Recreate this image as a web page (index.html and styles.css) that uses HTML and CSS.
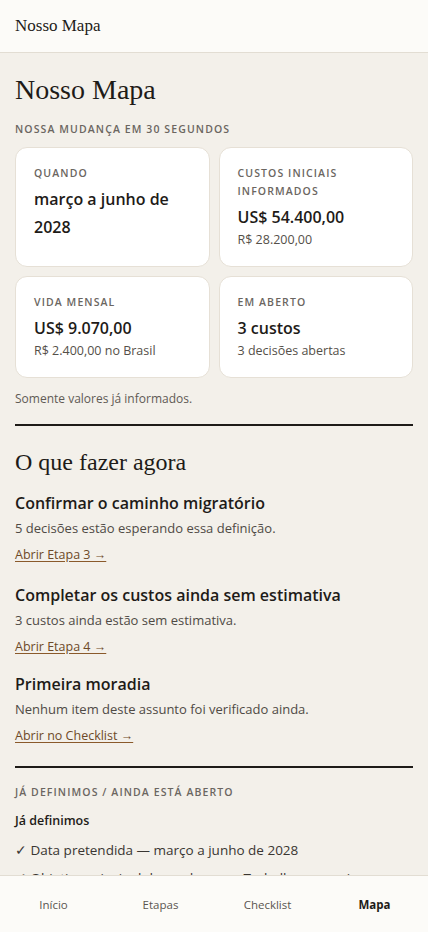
FILE: index.html
```html
<!DOCTYPE html>
<html lang="pt-BR">
<head>
  <meta charset="UTF-8">
  <title>Nosso Mapa</title>
  <link rel="stylesheet" href="styles.css">
</head>
<body>
  <header class="topbar">Nosso Mapa</header>

  <main class="page">
    <h1>Nosso Mapa</h1>
    <p class="eyebrow">Nossa mudança em 30 segundos</p>

    <div class="summary">
      <div class="card">
        <p class="card-label">Quando</p>
        <p class="card-value">março a junho de 2028</p>
      </div>
      <div class="card">
        <p class="card-label">Custos iniciais informados</p>
        <p class="card-value">US$ 54.400,00</p>
        <p class="card-sub">R$ 28.200,00</p>
      </div>
      <div class="card">
        <p class="card-label">Vida mensal</p>
        <p class="card-value">US$ 9.070,00</p>
        <p class="card-sub">R$ 2.400,00 no Brasil</p>
      </div>
      <div class="card">
        <p class="card-label">Em aberto</p>
        <p class="card-value">3 custos</p>
        <p class="card-sub">3 decisões abertas</p>
      </div>
    </div>
    <p class="note">Somente valores já informados.</p>

    <section class="block">
      <h2>O que fazer agora</h2>

      <div class="task">
        <h3>Confirmar o caminho migratório</h3>
        <p>5 decisões estão esperando essa definição.</p>
        <a href="#">Abrir Etapa 3 →</a>
      </div>
      <div class="task">
        <h3>Completar os custos ainda sem estimativa</h3>
        <p>3 custos ainda estão sem estimativa.</p>
        <a href="#">Abrir Etapa 4 →</a>
      </div>
      <div class="task last">
        <h3>Primeira moradia</h3>
        <p>Nenhum item deste assunto foi verificado ainda.</p>
        <a href="#">Abrir no Checklist →</a>
      </div>
    </section>

    <section class="block">
      <p class="eyebrow">Já definimos / ainda está aberto</p>
      <h4>Já definimos</h4>
      <ul class="checks">
        <li>✓ Data pretendida — março a junho de 2028</li>
        <li>✓ Objetivo principal da mudança — Trabalho e carreira</li>
      </ul>
    </section>
  </main>

  <nav class="tabbar">
    <a href="#">Início</a>
    <a href="#">Etapas</a>
    <a href="#">Checklist</a>
    <a href="#" class="active">Mapa</a>
  </nav>
</body>
</html>
```

FILE: styles.css
```css
body {
  margin: 0;
  background: #f3f0ea;
  color: #1e1b18;
  font-family: "Open Sans", "Noto Sans", sans-serif;
}
p, h1, h2, h3, h4, ul {
  margin: 0;
}
.topbar {
  height: 52px;
  padding: 0 15px;
  display: flex;
  align-items: center;
  background: #fcfbf8;
  border-bottom: 1px solid #e2ddd3;
  font-family: "Liberation Serif", serif;
  font-size: 17px;
}
.page {
  padding: 19px 15px 60px;
}
h1 {
  font-family: "Liberation Serif", serif;
  font-weight: normal;
  font-size: 28px;
  line-height: 36px;
  margin-bottom: 12px;
}
.eyebrow {
  font-size: 10.5px;
  line-height: 18px;
  font-weight: 600;
  letter-spacing: 1.1px;
  text-transform: uppercase;
  color: #6b6661;
  margin-bottom: 9px;
}
/* Karty se souhrnem */
.summary {
  display: grid;
  grid-template-columns: 1fr 1fr;
  gap: 9px;
}
.card {
  background: #fff;
  border: 1px solid #e6e0d6;
  border-radius: 12px;
  padding: 16px 18px 17px;
}
.card-label {
  font-size: 10.5px;
  line-height: 18px;
  font-weight: 600;
  letter-spacing: 1.1px;
  text-transform: uppercase;
  color: #6b6661;
}
.card-value {
  margin-top: 3px;
  font-size: 16px;
  line-height: 28px;
  font-weight: 600;
}
.card-sub {
  font-size: 12.5px;
  line-height: 18px;
  color: #555049;
}
.note {
  margin-top: 11px;
  font-size: 12px;
  line-height: 20px;
  color: #5f5a55;
}
.block {
  margin-top: 15px;
  border-top: 2px solid #1e1b18;
}
h2 {
  font-family: "Liberation Serif", serif;
  font-weight: normal;
  font-size: 24px;
  line-height: 30px;
  margin-top: 21px;
}
.task {
  margin-top: 18px;
}
.task:first-of-type {
  margin-top: 14px;
}
.task.last {
  margin-top: 15px;
}
.task h3 {
  font-size: 16px;
  line-height: 24px;
  font-weight: 600;
}
.task p {
  margin-top: 3px;
  font-size: 13px;
  line-height: 20px;
  color: #4f4a45;
}
.task a {
  display: inline-block;
  margin-top: 7px;
  font-size: 12.5px;
  line-height: 20px;
  color: #6e4a28;
  text-decoration: underline;
  text-decoration-color: #8a5a2b;
  text-underline-offset: 2px;
}
.block:last-child {
  margin-top: 20px;
  padding-top: 15px;
}
.block:last-child .eyebrow {
  margin-bottom: 10px;
}
h4 {
  font-size: 12.5px;
  line-height: 20px;
  font-weight: 600;
}
.checks {
  list-style: none;
  padding: 0;
  margin-top: 5px;
}
.checks li {
  font-size: 13.5px;
  line-height: 28px;
  color: #3a3632;
}
/* Spodní navigace */
.tabbar {
  position: fixed;
  left: 0;
  right: 0;
  bottom: 0;
  height: 56px;
  display: grid;
  grid-template-columns: repeat(4, 1fr);
  align-items: center;
  background: #fcfbf8;
  border-top: 1px solid #e2ddd3;
}
.tabbar a {
  text-align: center;
  font-size: 11.5px;
  color: #5a5550;
  text-decoration: none;
}
.tabbar a.active {
  font-weight: 700;
  color: #1e1b18;
}
```
